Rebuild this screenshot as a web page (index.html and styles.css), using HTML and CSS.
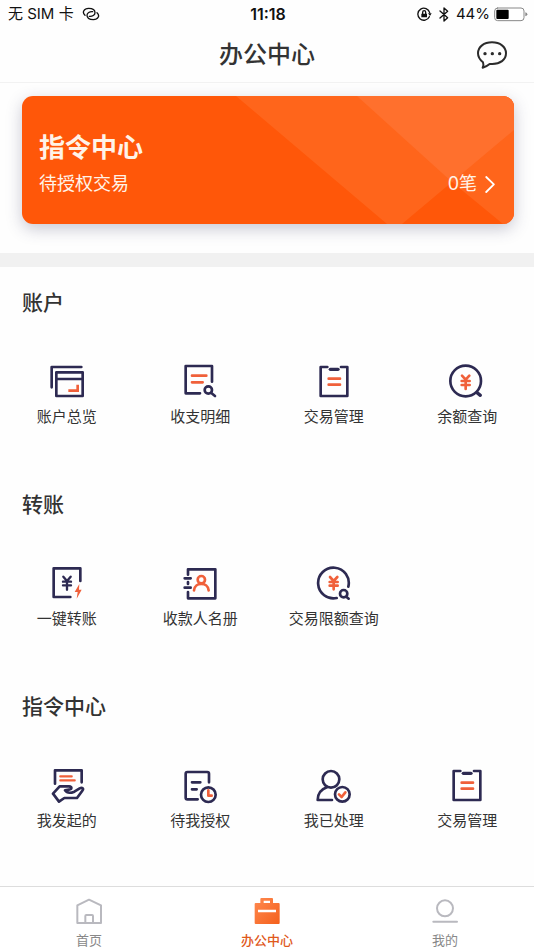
FILE: index.html
```html
<!DOCTYPE html>
<html lang="zh-CN">
<head>
<meta charset="utf-8">
<meta name="viewport" content="width=device-width, initial-scale=1">
<title>办公中心</title>
<link rel="stylesheet" href="styles.css">
</head>
<body>
<svg class="defs" aria-hidden="true">
  <symbol id="clipboard" viewBox="0 0 108 108">
    <path class="ink" d="M34 9H14V96H94V9H75"/>
    <path class="ink thick" d="M43 16H66"/>
    <path class="accent" d="M38 44H72M38 62H72"/>
  </symbol>
</svg>

<div class="status">
  <div class="status-side">
    <span>无 SIM 卡</span>
    <svg class="link-icon" viewBox="0 0 54 42"><path d="M9 25C-1 16 6 4 20 4C31 4 39 9 39 17C39 24 31 29 22 28M45 17C55 26 48 38 34 38C23 38 15 33 15 25C15 18 23 13 32 14"/></svg>
  </div>
  <time class="clock">11:18</time>
  <div class="status-side status-right">
    <svg class="lock-icon" viewBox="0 0 45 45"><path d="M37 29A18 18 0 1 1 38 17"/><path class="solid" d="M33 19H44L39 27ZM13 20H30V31H13Z"/><path d="M17 20V16Q17 11 21.500 11T26 16V20"/></svg>
    <svg class="bluetooth-icon" viewBox="0 0 30 45"><path d="M3 12L26 32L15 42V3L26 13L3 33"/></svg>
    <span>44%</span>
    <svg class="battery-icon" viewBox="0 0 102 45"><rect class="shell" x="2" y="3" width="88" height="38" rx="9"/><rect x="7" y="8" width="37" height="28" rx="3"/><path class="cap" d="M94 16Q100 17 100 22T94 28Z"/></svg>
  </div>
</div>

<header class="header">
  <h1>办公中心</h1>
  <button class="message" type="button" aria-label="消息">
    <svg viewBox="0 0 90 84"><path d="M18 64C8 56 3 47 3 37C3 17 21 4 45 4S87 17 87 37S69 69 46 69H38C31 75 24 78 17 80C20 74 20 69 18 64Z"/><circle cx="24" cy="38" r="5"/><circle cx="46" cy="38" r="5"/><circle cx="68" cy="38" r="5"/></svg>
  </button>
</header>

<main>
  <div class="hero">
    <a class="card" href="#orders">
      <svg class="card-art" viewBox="0 0 492 128" preserveAspectRatio="none"><path class="facet" d="M214 0H492V128H481L430 86L380 128H365Z"/><path class="facet-light" d="M335 0H492V34L430 86Z"/></svg>
      <h2>指令中心</h2>
      <div class="card-row">
        <span>待授权交易</span>
        <span class="count">0笔<svg viewBox="0 0 36 57"><path d="M4 4L29 28L4 53"/></svg></span>
      </div>
    </a>
  </div>

  <section class="group">
    <h2>账户</h2>
    <nav class="services" aria-label="账户">
      <a href="#overview"><svg viewBox="0 0 108 108"><path class="ink" d="M8 70V9H97M22 25H101V96H22ZM22 45H101"/><path class="accent square" d="M58 80H86V62"/></svg>账户总览</a>
      <a href="#details"><svg viewBox="0 0 108 108"><path class="ink" d="M90 53V6H11V88H54"/><path class="accent" d="M30 35H73M30 55H62"/><circle class="ink" cx="79" cy="78" r="11"/><path class="ink" d="M88 87L99 96"/></svg>收支明细</a>
      <a href="#manage"><svg><use href="#clipboard"/></svg>交易管理</a>
      <a href="#balance"><svg viewBox="0 0 108 108"><circle class="ink" cx="50" cy="51" r="46"/><path class="ink thick" d="M84 86L94 94"/><path class="accent" d="M39 35L50 47L61 35M50 47V75M38 51H62M38 63H62"/></svg>余额查询</a>
    </nav>
  </section>

  <section class="group">
    <h2>转账</h2>
    <nav class="services" aria-label="转账">
      <a href="#transfer"><svg viewBox="0 0 108 108"><path class="ink" d="M94 45V7H14V93H64"/><path class="ink thin" d="M43 32L54 45L65 32M54 45V71M42 47H66M42 58H66"/><path class="bolt" d="M91 54L77 78H86L83 98L98 71H90Z"/></svg>一键转账</a>
      <a href="#payees"><svg viewBox="0 0 108 108"><path class="ink" d="M18 26V10H100V97H18V78M18 48V54M8 37H26M8 65H26"/><circle class="accent" cx="58" cy="41" r="11"/><path class="accent" d="M36 73C38 47 78 47 80 73"/></svg>收款人名册</a>
      <a href="#limits"><svg viewBox="0 0 108 108"><path class="ink" d="M97 62A46 46 0 1 0 62 96"/><path class="accent" d="M42 33L53 45L64 33M53 45V70M41 48H65M41 59H65"/><circle class="ink" cx="83" cy="83" r="11"/><path class="ink" d="M91 92L98 98"/></svg>交易限额查询</a>
    </nav>
  </section>

  <section class="group" id="orders">
    <h2>指令中心</h2>
    <nav class="services" aria-label="指令中心">
      <a href="#started"><svg viewBox="0 0 108 108"><path class="ink" d="M18 47V7H98V43"/><path class="accent thin" d="M34 25H68M34 37H77"/><path class="ink" d="M12 77L32 55H60C70 56 69 64 60 65L48 67C54 76 66 75 76 71L92 61C100 57 105 62 100 68L84 90H46L30 101Z"/></svg>我发起的</a>
      <a href="#pending"><svg viewBox="0 0 108 108"><path class="ink" d="M81 43V17Q81 12 76 12H16Q11 12 11 17V89Q11 94 16 94H47M30 43H55M30 64H44"/><circle class="ink" cx="79" cy="80" r="22"/><path class="accent" d="M79 67V83H89"/></svg>待我授权</a>
      <a href="#done"><svg viewBox="0 0 108 108"><circle class="ink" cx="45" cy="34" r="25"/><path class="ink" d="M34 57C14 64 5 80 5 96H48"/><circle class="ink" cx="79" cy="79" r="22"/><path class="accent" d="M69 79L77 87L88 73"/></svg>我已处理</a>
      <a href="#manage"><svg><use href="#clipboard"/></svg>交易管理</a>
    </nav>
  </section>
</main>

<nav class="tabs" aria-label="主导航">
  <a href="#home"><svg viewBox="0 0 78 78"><path d="M4 22L39 5L75 22V75H4ZM28 75V54Q28 51 31 51H48Q51 51 51 54V75"/></svg>首页</a>
  <a class="active" href="#office" aria-current="page"><svg viewBox="0 0 78 78"><defs><linearGradient id="glow" x1="0" y1="0" x2="1" y2="1"><stop offset="0" stop-color="#ff8a50"/><stop offset="1" stop-color="#f4601c"/></linearGradient></defs><path fill="url(#glow)" fill-rule="evenodd" d="M22 0H54Q57 0 57 3V15H74Q77 15 77 18V75Q77 78 74 78H5Q2 78 2 75V18Q2 15 5 15H19V3Q19 0 22 0ZM29 8V15H48V8ZM12 35V43H66V35Z"/></svg>办公中心</a>
  <a href="#me"><svg viewBox="0 0 78 78"><circle cx="39" cy="31" r="24"/><path d="M4 71H75"/></svg>我的</a>
</nav>
</body>
</html>
```

FILE: styles.css
```css
* {
  box-sizing: border-box;
}

body {
  margin: 0;
  min-height: 100vh;
  display: flex;
  flex-direction: column;
  background: #fefefe;
  color: #333;
  font-family: Inter, "Noto Sans CJK SC", sans-serif;
}

h1,
h2 {
  margin: 0;
}

a {
  color: inherit;
  text-decoration: none;
}

svg {
  display: block;
  fill: none;
  stroke-linecap: round;
  stroke-linejoin: round;
}

.defs {
  position: absolute;
  width: 0;
  height: 0;
}

/* Status bar */

.status {
  display: grid;
  grid-template-columns: 1fr auto 1fr;
  align-items: center;
  height: 28px;
  padding: 0 6px 0 8px;
  color: #111;
  font-size: 15px;
  line-height: 20px;
}

.status-side {
  display: flex;
  align-items: center;
  gap: 8px;
}

.status-right {
  justify-content: flex-end;
  gap: 4px;
}

.clock {
  font-size: 16px;
  font-weight: 600;
}

.status svg {
  stroke: #111;
  stroke-width: 4;
}

.link-icon {
  width: 18px;
  height: 14px;
}

.lock-icon {
  width: 15px;
  height: 15px;
}

.lock-icon .solid {
  fill: #111;
  stroke: none;
}

.bluetooth-icon {
  width: 10px;
  height: 15px;
  margin: 0 3px;
}

.battery-icon {
  width: 34px;
  height: 15px;
}

.battery-icon rect {
  fill: #000;
  stroke: none;
}

.battery-icon .shell {
  fill: #fff;
  stroke: #888;
  stroke-width: 3;
}

.battery-icon .cap {
  fill: #888;
  stroke: none;
}

/* Title bar */

.header {
  display: grid;
  grid-template-columns: 1fr auto 1fr;
  align-items: center;
  height: 55px;
  padding: 0 27px;
  border-bottom: 1px solid #f2f2f2;
}

.header h1 {
  grid-column: 2;
  font-size: 24px;
  font-weight: 500;
  line-height: 32px;
}

.message {
  justify-self: end;
  padding: 0;
  border: 0;
  background: none;
  cursor: pointer;
}

.message svg {
  width: 30px;
  height: 28px;
  stroke: #2b2b2b;
  stroke-width: 6;
}

.message circle {
  fill: #2b2b2b;
  stroke: none;
}

/* Featured card */

.hero {
  padding: 13px 20px 29px 22px;
  border-bottom: 14px solid #f1f1f1;
}

.card {
  position: relative;
  display: block;
  height: 128px;
  padding: 34px 18px 0 17px;
  border-radius: 11px;
  overflow: hidden;
  background: #ff5709;
  box-shadow: 0 5px 16px rgba(60, 60, 100, 0.28);
  color: #fff3e8;
}

.card-art {
  position: absolute;
  inset: 0;
  width: 100%;
  height: 100%;
}

.facet {
  fill: #ff651b;
}

.facet-light {
  fill: #ff702d;
}

.card h2 {
  position: relative;
  font-size: 26px;
  font-weight: 600;
  line-height: 36px;
}

.card-row {
  position: relative;
  display: flex;
  justify-content: space-between;
  margin-top: 5px;
  font-size: 18px;
  font-weight: 400;
  line-height: 26px;
}

.count {
  display: flex;
  align-items: center;
  gap: 8px;
}

.count svg {
  width: 11px;
  height: 19px;
  stroke: #fff;
  stroke-width: 6;
}

/* Service groups */

.group {
  padding: 22px 0 40px;
}

.group h2 {
  padding: 0 22px;
  font-size: 21px;
  font-weight: 500;
  line-height: 28px;
}

.services {
  display: grid;
  grid-template-columns: repeat(4, 1fr);
  margin-top: 47px;
}

.services a {
  display: flex;
  flex-direction: column;
  align-items: center;
  gap: 5px;
  font-size: 15px;
  line-height: 24px;
  white-space: nowrap;
}

.services svg {
  width: 36px;
  height: 36px;
}

.ink {
  stroke: #2d2a52;
  stroke-width: 8;
}

.accent {
  stroke: #f0603a;
  stroke-width: 8;
}

.thick {
  stroke-width: 10;
}

.thin {
  stroke-width: 7;
}

.square {
  stroke-linecap: butt;
  stroke-linejoin: miter;
}

.bolt {
  fill: #f0603a;
}

/* Bottom tabs */

.tabs {
  display: grid;
  grid-template-columns: repeat(3, 1fr);
  height: 64px;
  margin-top: auto;
  padding-top: 11px;
  border-top: 1px solid #ddd;
  background: #fff;
  color: #888;
  font-size: 13px;
  line-height: 18px;
}

.tabs a {
  display: flex;
  flex-direction: column;
  align-items: center;
  gap: 7px;
}

.tabs svg {
  width: 26px;
  height: 26px;
  stroke: #b9b9bf;
  stroke-width: 6;
}

.tabs .active {
  color: #e0591c;
  font-weight: 500;
}

.tabs .active svg {
  stroke: none;
}
```
